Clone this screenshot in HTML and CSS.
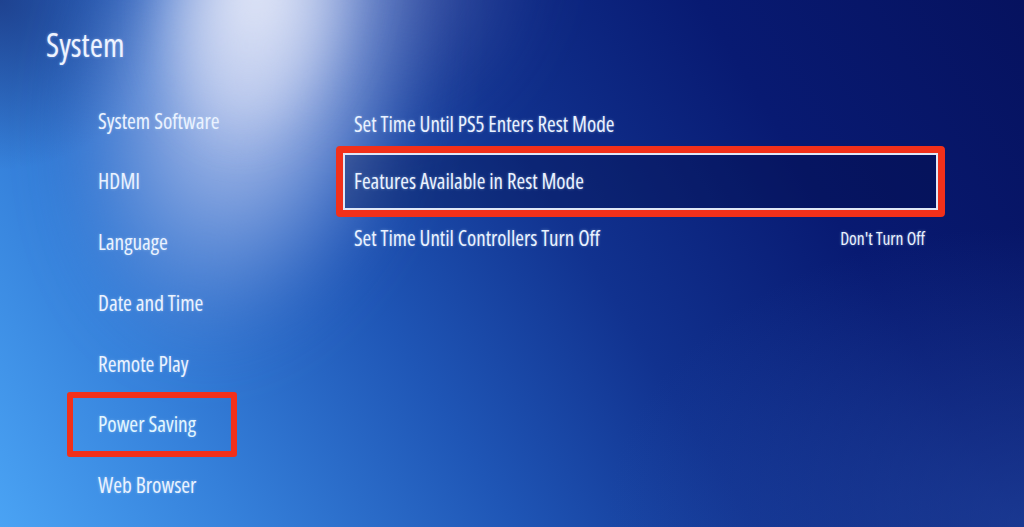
FILE: index.html
```html
<!DOCTYPE html>
<html lang="en">
<head>
<meta charset="utf-8">
<title>System</title>
<link rel="stylesheet" href="styles.css">
</head>
<body>
<div class="screen">
  <div class="beam beam-haze"></div>
  <div class="beam"></div>
  <div class="beam beam-core"></div>
  <h1 class="title">System</h1>
  <div class="body">
    <ul class="nav">
      <li class="nav-item">System Software</li>
      <li class="nav-item">HDMI</li>
      <li class="nav-item">Language</li>
      <li class="nav-item">Date and Time</li>
      <li class="nav-item">Remote Play</li>
      <li class="nav-item nav-item-marked">Power Saving</li>
      <li class="nav-item">Web Browser</li>
    </ul>
    <ul class="list">
      <li class="row"><span class="row-label">Set Time Until PS5 Enters Rest Mode</span></li>
      <li class="row row-focus"><span class="row-label">Features Available in Rest Mode</span></li>
      <li class="row"><span class="row-label">Set Time Until Controllers Turn Off</span><span class="row-value">Don't Turn Off</span></li>
    </ul>
  </div>
</div>
</body>
</html>
```
FILE: styles.css
```css
html, body {
  margin: 0;
  padding: 0;
}
body {
  width: 1024px;
  height: 527px;
  overflow: hidden;
  font-family: "Open Sans", "DejaVu Sans Condensed", sans-serif;
  font-stretch: 75%;
  font-weight: 500;
  color: #eaf2ff;
}
.screen {
  position: relative;
  width: 1024px;
  height: 527px;
  overflow: hidden;
  background-color: #123a9c;
  background-image:
    radial-gradient(circle at 0 0, rgba(22, 40, 110, 0.65), rgba(22, 40, 110, 0) 170px),
    radial-gradient(ellipse 420px 300px at 1024px 527px, rgba(40, 80, 170, 0.55), rgba(40, 80, 170, 0)),
    linear-gradient(58deg, #4aa3f4 0%, #3580da 18%, #1f56b6 38%, #11328f 56%, #081a72 76%, #06125f 100%);
}
.beam {
  position: absolute;
  left: 0;
  top: -100px;
  width: 420px;
  height: 660px;
  transform: rotate(14deg);
  background: radial-gradient(ellipse 50% 50% at 50% 26%, rgba(205, 214, 244, 0.9) 0%, rgba(178, 195, 238, 0.75) 30%, rgba(140, 170, 230, 0.45) 58%, rgba(120, 150, 220, 0.12) 78%, rgba(120, 150, 220, 0) 92%);
  filter: blur(26px);
  pointer-events: none;
}
.beam-haze {
  left: 180px;
  top: -200px;
  width: 440px;
  height: 420px;
  transform: rotate(6deg);
  background: radial-gradient(ellipse 50% 50% at 40% 40%, rgba(150, 160, 210, 0.5) 0%, rgba(110, 125, 190, 0.28) 45%, rgba(100, 115, 180, 0) 85%);
  filter: blur(30px);
}
.beam-core {
  left: 110px;
  top: -150px;
  width: 270px;
  height: 400px;
  transform: rotate(12deg);
  background: radial-gradient(ellipse 50% 50% at 50% 35%, rgba(240, 242, 252, 0.92) 0%, rgba(218, 225, 246, 0.62) 40%, rgba(200, 210, 240, 0) 80%);
  filter: blur(22px);
}
.title {
  position: relative;
  margin: 0;
  padding: 25px 0 0 46px;
  height: 40px;
  line-height: 40px;
  font-size: 32px;
  font-weight: 500;
  color: #eef3ff;
  text-shadow: 0 0 3px rgba(200, 220, 255, 0.5);
}
.body {
  position: relative;
  display: flex;
  margin-top: 25.5px;
}
.nav {
  list-style: none;
  margin: 0;
  padding: 0 0 0 98px;
  width: 245px;
}
.nav-item {
  position: relative;
  height: 60.8px;
  line-height: 60.8px;
  font-size: 21.3px;
  white-space: nowrap;
  text-shadow: 0 0 3px rgba(200, 230, 255, 0.45);
}
.nav-item-marked {
  color: #e2f6ff;
}
.nav-item-marked::after {
  content: "";
  position: absolute;
  left: -31px;
  top: -2px;
  width: 158px;
  height: 53px;
  border: 6px solid #f2301a;
  border-radius: 3px;
}
.list {
  list-style: none;
  margin: 5px 0 0 0;
  padding: 0;
  width: 595px;
}
.row {
  position: relative;
  display: flex;
  align-items: center;
  justify-content: space-between;
  box-sizing: border-box;
  height: 57px;
  padding: 0 11px 0 9px;
  border: 2px solid transparent;
  font-size: 21px;
  white-space: nowrap;
  text-shadow: 0 0 3px rgba(200, 230, 255, 0.45);
}
.row-focus {
  border-color: #dfe7f6;
  background: rgba(4, 10, 60, 0.3);
}
.row-focus::after {
  content: "";
  position: absolute;
  left: -9px;
  top: -9px;
  right: -9px;
  bottom: -9px;
  border: 7px solid #f2301a;
  border-radius: 4px;
}
.row-value {
  font-size: 17.5px;
}
```
